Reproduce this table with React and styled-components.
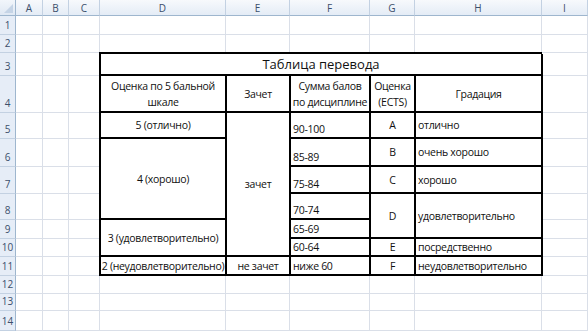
import React from "react";
import styled, { createGlobalStyle } from "styled-components";

const GlobalStyle = createGlobalStyle`
  html, body { margin: 0; padding: 0; background: #fff; }
  body { font-family: "Open Sans", "Liberation Sans", sans-serif; }
`;

const colWidths = [27, 26, 31, 126, 64, 80, 45, 127, 46];
const colNames = ["A", "B", "C", "D", "E", "F", "G", "H", "I"];
const rowHeights = [19, 18, 23, 37, 26, 28, 27, 26, 19, 18, 19, 18, 17, 20];

const Sheet = styled.div`
  display: grid;
  grid-template-columns: 16px ${colWidths.map((w) => w + "px").join(" ")};
  grid-template-rows: 16px ${rowHeights.map((h) => h + "px").join(" ")};
  width: 588px;
  height: 331px;
  overflow: hidden;
`;

const Corner = styled.div`
  position: relative;
  background: linear-gradient(#f2f6fb, #dfe8f3);
  border-right: 1px solid #9eb6ce;
  border-bottom: 1px solid #9eb6ce;
  &::after {
    content: "";
    position: absolute;
    right: 2px;
    bottom: 2px;
    border-left: 9px solid transparent;
    border-bottom: 9px solid #c5d4e6;
  }
`;

const ColHead = styled.div`
  display: flex;
  align-items: center;
  justify-content: center;
  background: linear-gradient(#f7f9fc, #e4ecf6);
  border-right: 1px solid #c3d1e2;
  border-bottom: 1px solid #9eb6ce;
  font-size: 10px;
  color: #3b4f6b;
`;

const RowHead = styled.div`
  display: flex;
  align-items: flex-end;
  justify-content: center;
  padding-bottom: 1px;
  box-sizing: border-box;
  background: #e6edf7;
  border-right: 1px solid #9eb6ce;
  border-bottom: 1px solid #c3d1e2;
  font-size: 10px;
  line-height: 15px;
  color: #3b4f6b;
`;

const Blank = styled.div`
  border-right: 1px solid #dadfe8;
  border-bottom: 1px solid #dadfe8;
`;

const Table = styled.div`
  grid-column: 5 / 10;
  grid-row: 4 / 13;
  margin: -1px 0 0 -1px;
  display: grid;
  grid-template-columns: 126px 64px 80px 45px 127px;
  grid-template-rows: 22px 37px 26px 28px 27px 26px 19px 18px 19px;
  border-top: 2px solid #000;
  border-left: 2px solid #000;
  background: #fff;
  color: #111;
  font-size: 10.5px;
  letter-spacing: -0.3px;
  line-height: 16px;
`;

const Cell = styled.div`
  display: flex;
  align-items: ${(p) => (p.$bottom ? "flex-end" : "center")};
  justify-content: ${(p) => (p.$left ? "flex-start" : "center")};
  text-align: ${(p) => (p.$left ? "left" : "center")};
  padding: ${(p) => (p.$left ? "0 1px 0 2px" : "0 1px")};
  border-right: 2px solid #000;
  border-bottom: 2px solid #000;
  grid-column: ${(p) => p.$col};
  grid-row: ${(p) => p.$row};
  white-space: nowrap;
  overflow: hidden;
  font-size: ${(p) => (p.$title ? "13px" : "inherit")};
  letter-spacing: ${(p) => (p.$title ? "0" : "inherit")};
`;

const isTableArea = (r, c) => r >= 3 && r <= 11 && c >= 4 && c <= 8;

export default function App() {
  const blanks = [];
  rowHeights.forEach((_, ri) => {
    colNames.forEach((_, ci) => {
      const r = ri + 1;
      const c = ci + 1;
      if (!isTableArea(r, c)) {
        blanks.push(<Blank key={r + "-" + c} style={{ gridRow: r + 1, gridColumn: c + 1 }} />);
      }
    });
  });

  return (
    <>
      <GlobalStyle />
      <Sheet>
        <Corner />
        {colNames.map((n) => (
          <ColHead key={n}>{n}</ColHead>
        ))}
        {rowHeights.map((_, i) => (
          <RowHead key={i} style={{ gridRow: i + 2, gridColumn: 1 }}>
            {i + 1}
          </RowHead>
        ))}
        {blanks}
        <Table>
          <Cell $col="1 / 6" $row="1" $title>Таблица перевода</Cell>

          <Cell $col="1" $row="2">Оценка по 5 бальной<br />шкале</Cell>
          <Cell $col="2" $row="2">Зачет</Cell>
          <Cell $col="3" $row="2">Сумма балов<br />по дисциплине</Cell>
          <Cell $col="4" $row="2">Оценка<br />(ECTS)</Cell>
          <Cell $col="5" $row="2">Градация</Cell>

          <Cell $col="1" $row="3">5 (отлично)</Cell>
          <Cell $col="1" $row="4 / 7">4 (хорошо)</Cell>
          <Cell $col="1" $row="7 / 9">3 (удовлетворительно)</Cell>
          <Cell $col="1" $row="9">2 (неудовлетворительно)</Cell>

          <Cell $col="2" $row="3 / 9">зачет</Cell>
          <Cell $col="2" $row="9">не зачет</Cell>

          <Cell $col="3" $row="3" $left $bottom>90-100</Cell>
          <Cell $col="3" $row="4" $left $bottom>85-89</Cell>
          <Cell $col="3" $row="5" $left $bottom>75-84</Cell>
          <Cell $col="3" $row="6" $left $bottom>70-74</Cell>
          <Cell $col="3" $row="7" $left $bottom>65-69</Cell>
          <Cell $col="3" $row="8" $left $bottom>60-64</Cell>
          <Cell $col="3" $row="9" $left $bottom>ниже 60</Cell>

          <Cell $col="4" $row="3">A</Cell>
          <Cell $col="4" $row="4">B</Cell>
          <Cell $col="4" $row="5">C</Cell>
          <Cell $col="4" $row="6 / 8">D</Cell>
          <Cell $col="4" $row="8">E</Cell>
          <Cell $col="4" $row="9">F</Cell>

          <Cell $col="5" $row="3" $left>отлично</Cell>
          <Cell $col="5" $row="4" $left>очень хорошо</Cell>
          <Cell $col="5" $row="5" $left>хорошо</Cell>
          <Cell $col="5" $row="6 / 8" $left>удовлетворительно</Cell>
          <Cell $col="5" $row="8" $left>посредственно</Cell>
          <Cell $col="5" $row="9" $left>неудовлетворительно</Cell>
        </Table>
      </Sheet>
    </>
  );
}
